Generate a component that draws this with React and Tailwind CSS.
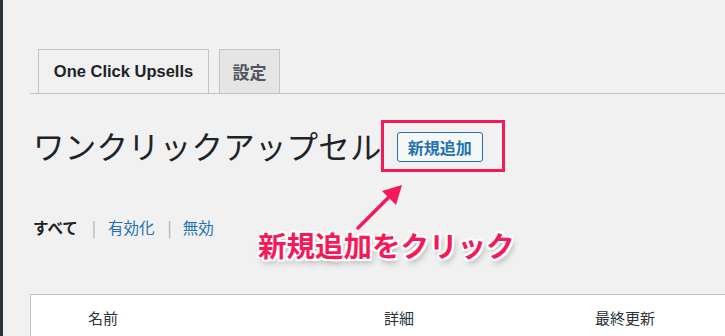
import React from 'react'

const jp = { fontFamily: '"Noto Sans CJK JP", "Liberation Sans", sans-serif' }
const latin = { fontFamily: '"Liberation Sans", "Noto Sans CJK JP", sans-serif' }

export default function App() {
  return (
    <div className="relative flex w-[725px] h-[336px] overflow-hidden bg-[#f1f1f1]" style={jp}>
      {/* admin menu edge */}
      <div className="w-[3px] shrink-0 bg-[#2c3338]" />

      <div className="flex-1 pl-[27px]">
        {/* Tabs */}
        <div className="flex items-end gap-[10px] pl-[8px] pt-[49px] border-b border-[#c3c4c7]">
          <div
            className="h-[44px] w-[171px] justify-center flex items-center border border-b-0 border-[#c3c4c7] bg-[#f1f1f1] text-[16.5px] font-bold text-[#1d2327]"
            style={latin}
          >
            One Click Upsells
          </div>
          <div className="h-[44px] w-[61px] justify-center flex items-center border border-b-0 border-[#c3c4c7] bg-[#e5e5e5] text-[17px] font-bold text-[#50575e]">
            設定
          </div>
        </div>

        {/* Heading */}
        <div className="flex items-center pl-[3px] mt-[31px] h-[40px]">
          <h1 className="text-[31.5px] leading-[40px] font-normal text-[#1d2327] tracking-[0.2px]">ワンクリックアップセル</h1>
          <div className="relative ml-[15px] mt-[4px]">
            <button className="h-[30px] w-[86px] rounded-[3px] border border-[#2271b1] bg-[#f6f7f7] text-[16px] font-bold text-[#2271b1] leading-none">
              新規追加
            </button>
            <div className="absolute left-[-16px] top-[-12px] w-[124px] h-[52px] border-[3px] border-[#f5195a]" />
          </div>
        </div>

        {/* Filter links */}
        <div className="flex items-center pl-[3px] mt-[52px] text-[15.5px] leading-[20px]">
          <span className="font-bold text-[#1d2327]">すべて</span>
          <span className="ml-[14px] mr-[12px] text-[#a7aaad]">|</span>
          <span className="text-[#2271b1]">有効化</span>
          <span className="ml-[13px] mr-[11px] text-[#a7aaad]">|</span>
          <span className="text-[#2271b1]">無効</span>
        </div>

        {/* Table */}
        <div className="mt-[57px] bg-white border-t border-l border-[#c3c4c7]">
          <div className="flex h-[46px] items-center text-[15px] text-[#2c3338]">
            <div className="w-[57px] shrink-0" />
            <div className="w-[296px] shrink-0">名前</div>
            <div className="w-[211px] shrink-0">詳細</div>
            <div>最終更新</div>
          </div>
        </div>
      </div>

      {/* Annotation arrow */}
      <svg className="absolute left-[352px] top-[180px]" width="56" height="54" viewBox="0 0 56 54">
        <line x1="6" y1="48" x2="42" y2="12" stroke="#f5195a" strokeWidth="3.5" strokeLinecap="round" />
        <polygon points="50,5 30,11 44,25" fill="#f5195a" />
      </svg>

      {/* Annotation text */}
      <div
        className="absolute left-[258px] top-[225px] text-[28.5px] leading-[40px] font-bold text-[#f5195a] whitespace-nowrap"
        style={{
          textShadow:
            '2px 0 0 #fff, -2px 0 0 #fff, 0 2px 0 #fff, 0 -2px 0 #fff, 2px 2px 0 #fff, -2px -2px 0 #fff, 2px -2px 0 #fff, -2px 2px 0 #fff, 2px 4px 6px rgba(0,0,0,0.35)',
        }}
      >
        新規追加をクリック
      </div>
    </div>
  )
}
